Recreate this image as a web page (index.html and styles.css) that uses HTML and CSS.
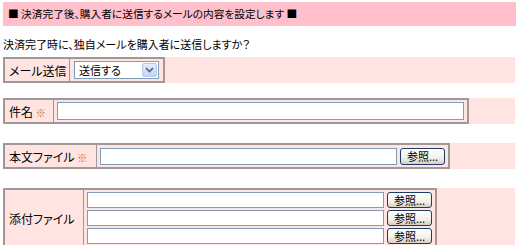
FILE: index.html
```html
<!DOCTYPE html>
<html lang="ja">
<head>
<meta charset="utf-8">
<link rel="stylesheet" href="styles.css">
</head>
<body>
<div class="page">
  <div class="header">■ 決済完了後、購入者に送信するメールの内容を設定します ■</div>
  <p class="question">決済完了時に、独自メールを購入者に送信しますか？</p>

  <div class="row r1">
    <table class="frm">
      <tr>
        <th class="lbl l1">メール送信</th>
        <td class="fld f1">
          <div class="select"><span class="sel-text">送信する</span><span class="sel-arrow"><svg width="9" height="6" viewBox="0 0 9 6"><path d="M1 1 L4.5 4.5 L8 1" fill="none" stroke="#4d6185" stroke-width="1.6"/></svg></span></div>
        </td>
      </tr>
    </table>
  </div>

  <div class="row r2">
    <table class="frm">
      <tr>
        <th class="lbl l2">件名 <span class="req">※</span></th>
        <td class="fld f2"><input class="txt subject" type="text"></td>
      </tr>
    </table>
  </div>

  <div class="row r3">
    <table class="frm">
      <tr>
        <th class="lbl l3">本文ファイル <span class="req">※</span></th>
        <td class="fld f3"><div class="file"><input class="txt bodyfile" type="text"><button class="browse">参照...</button></div></td>
      </tr>
    </table>
  </div>

  <div class="row r4">
    <table class="frm">
      <tr>
        <th class="lbl l4">添付ファイル</th>
        <td class="fld f4">
          <div class="file"><input class="txt attach" type="text"><button class="browse">参照...</button></div>
          <div class="file"><input class="txt attach" type="text"><button class="browse">参照...</button></div>
          <div class="file"><input class="txt attach" type="text"><button class="browse">参照...</button></div>
        </td>
      </tr>
    </table>
  </div>
</div>
</body>
</html>
```
FILE: styles.css
```css
html, body {
  margin: 0;
  padding: 0;
  background: #ffffff;
}
body {
  font-family: "Noto Sans CJK JP", sans-serif;
  font-size: 11px;
  color: #000;
  font-feature-settings: "palt";
}
.page {
  padding: 2px 3px 0 3px;
}
.header {
  background: #ffbfcb;
  height: 24px;
  line-height: 24px;
  padding-left: 5px;
  font-size: 10.7px;
}
.question {
  margin: 11px 0 0 0;
  line-height: 14px;
  height: 14px;
  font-size: 11px;
}
.row {
  background: #ffe4e1;
  display: flex;
  margin-right: 1px;
}
.r1 { margin-top: 6px; }
.r2 { margin-top: 15px; }
.r3 { margin-top: 19px; }
.r4 { margin-top: 19px; }

.frm {
  border-collapse: collapse;
  border: 2px solid #a09898;
}
.frm th, .frm td {
  border: 1px solid #a09898;
  padding: 0;
}
.lbl {
  font-weight: normal;
  font-size: 12px;
  text-align: left;
  padding-left: 4px !important;
  white-space: nowrap;
}
.req {
  color: #d06a30;
  font-size: 10px;
}
.l1 { width: 60px; height: 22px; }
.l2 { width: 44px; height: 22px; }
.l3 { width: 87px; height: 22px; }
.l4 { width: 74px; }
.fld { padding: 0 3px 0 3px !important; }

.select {
  display: flex;
  align-items: center;
  width: 85px;
  height: 18px;
  border: 1px solid #7f9db9;
  background: #fff;
  box-sizing: border-box;
  margin-left: 1px;
  margin-right: 1px;
}
.sel-text {
  flex: 1;
  padding-left: 4px;
  font-size: 11px;
  line-height: 16px;
}
.sel-arrow {
  width: 15px;
  height: 14px;
  margin-right: 1px;
  border: 1px solid #b6c7ea;
  border-radius: 2px;
  box-sizing: border-box;
  background: linear-gradient(#e4ecfc, #c4d4f6);
  display: flex;
  align-items: center;
  justify-content: center;
}

.txt {
  display: block;
  box-sizing: border-box;
  height: 18px;
  border: 1px solid #7f9db9;
  background: #fff;
  margin: 0;
  padding: 0;
}
.subject { width: 407px; }
.bodyfile { width: 297px; height: 17px; }
.attach { width: 297px; height: 16px; }

.file {
  display: flex;
  align-items: center;
  gap: 3px;
}
.f4 .file + .file { margin-top: 2px; }
.f4 { padding-top: 2px !important; padding-bottom: 2px !important; }

.browse {
  box-sizing: border-box;
  width: 45px;
  height: 17px;
  padding: 0;
  margin: 0;
  border: 1px solid #1c3c6c;
  border-radius: 3px;
  background: linear-gradient(#ffffff, #f2f1ea 60%, #d6d0c0);
  font-family: "Noto Sans CJK JP", sans-serif;
  font-size: 11px;
  line-height: 15px;
  color: #000;
}
.f4 .browse { height: 16px; line-height: 14px; }
```
